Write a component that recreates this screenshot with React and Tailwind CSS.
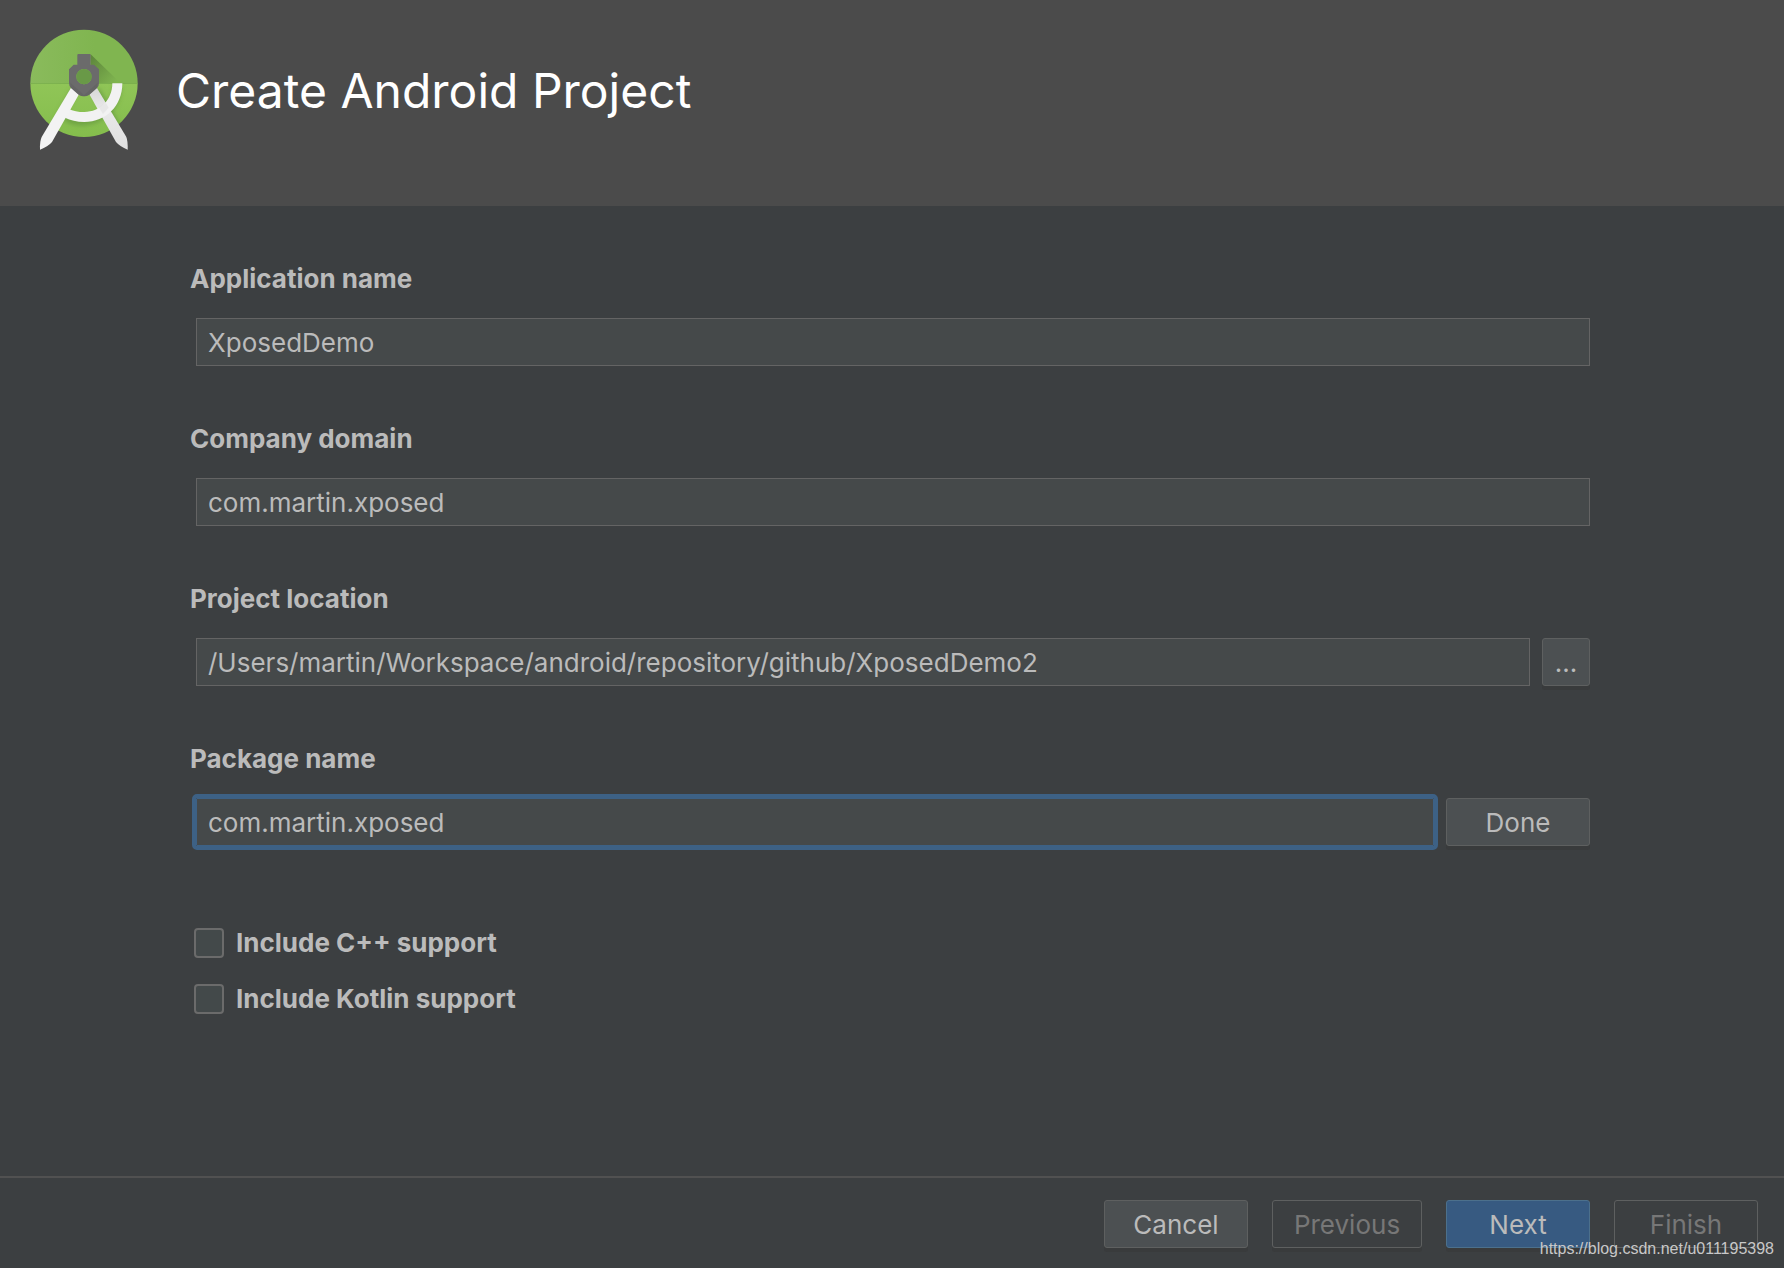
import React from "react";

const inputBase =
  "h-12 min-w-0 flex-1 border bg-[#45494a] px-[11px] text-[26px] leading-8 text-[#bbbbbb] outline-none";
const focusedInput =
  "h-12 min-w-0 flex-1 rounded-[1px] border border-[#3d6185] bg-[#45494a] px-[11px] text-[26px] leading-8 text-[#bbbbbb] outline-4 outline-[#3d6185]";
const buttonBase =
  "h-12 rounded-[3px] border pt-0.5 text-[26px] leading-8 shadow-[0_4px_0_#393b3c]";

function Logo() {
  return (
    <svg
      width="108"
      height="121"
      viewBox="90 87 324 363"
      role="img"
      aria-label="Android Studio"
      className="shrink-0"
    >
      <defs>
        <clipPath id="disc">
          <circle cx="252" cy="250" r="161" />
        </clipPath>
        <linearGradient id="lower" x1="0" y1="0" x2="0" y2="1">
          <stop offset="0" stopColor="#90c557" />
          <stop offset="1" stopColor="#84bd4c" />
        </linearGradient>
        <linearGradient id="upper" x1="0" y1="0" x2="1" y2="0">
          <stop offset="0" stopColor="#8abb5c" />
          <stop offset="0.6" stopColor="#80b550" />
        </linearGradient>
        <linearGradient id="cast" x1="270" y1="180" x2="345" y2="250" gradientUnits="userSpaceOnUse">
          <stop offset="0" stopColor="#5f883c" />
          <stop offset="1" stopColor="#80b550" />
        </linearGradient>
        <linearGradient id="leg" x1="0" y1="0" x2="0" y2="1">
          <stop offset="0" stopColor="#d6d6d6" />
          <stop offset="0.35" stopColor="#e9e9e9" />
          <stop offset="1" stopColor="#e0e0e0" />
        </linearGradient>
        <filter id="soft" x="-30%" y="-30%" width="160%" height="160%">
          <feGaussianBlur stdDeviation="7" />
        </filter>
      </defs>
      <g clipPath="url(#disc)">
        <rect x="90" y="87" width="324" height="165" fill="url(#upper)" />
        <rect x="90" y="252" width="324" height="165" fill="url(#lower)" />
        <path d="M272 163 L362 250 L275 250 Z" fill="url(#cast)" />
        <rect x="90" y="250" width="324" height="2" fill="#79ae4b" />
        <g filter="url(#soft)" fill="none" stroke="#5f933a" strokeOpacity="0.6">
          <path d="M352 258 C352 312 310 360 252 364 C230 365 210 360 198 350" strokeWidth="26" />
          <path d="M288 270 L365 405" strokeWidth="24" />
          <path d="M224 268 L150 405" strokeWidth="20" />
        </g>
      </g>
      <path d="M268 283 L289 261 L379 411 Q384 424 383 449 Q360 440 348 426 Z" fill="url(#leg)" />
      <path
        d="M337 250 H367 C367 318 318 366 253 366 C230 366 211 360 195 353 L205 326 C219 333 235 336 253 336 C301 336 337 299 337 250 Z"
        fill="#f2f2f2"
      />
      <path d="M215 260 L237 283 L156 426 Q144 440 120 449 Q119 424 125 411 Z" fill="#f3f3f3" />
      <path d="M318 309 L326 323 L309 342 L296 321 Z" fill="#dedede" opacity="0.55" />
      <path
        fillRule="evenodd"
        d="M235 162 H269 Q272 162 272 165 V194 H282 L297 208 V250 Q297 258 291 264 L268 284 Q252 293 236 284 L213 264 Q207 258 207 250 V208 L221 194 H232 V165 Q232 162 235 162 Z M252 207 A23 23 0 1 0 252 253 A23 23 0 1 0 252 207 Z"
        fill="#6b6b6b"
      />
      <circle cx="252" cy="230" r="23" fill="#699947" />
      <path d="M211 248 L252 286 L293 248 L291 264 L268 284 Q252 293 236 284 L213 264 Z" fill="#5f5f5f" opacity="0.5" />
    </svg>
  );
}

function Field({ id, label, value, focused, children }) {
  return (
    <div className="flex flex-col gap-[22px]">
      <label htmlFor={id} className="text-[26px] leading-[34px] font-bold">
        {label}
      </label>
      <div className="flex gap-3 pl-1.5">
        <input
          id={id}
          type="text"
          defaultValue={value}
          className={focused ? focusedInput : `${inputBase} border-[#646464]`}
        />
        {children}
      </div>
    </div>
  );
}

function Check({ id, label }) {
  return (
    <div className="flex items-center gap-3">
      <input
        id={id}
        type="checkbox"
        className="size-[30px] appearance-none rounded-[4px] border-2 border-[#6b6b6b] bg-[#43494a] checked:bg-[#375a81]"
      />
      <label htmlFor={id} className="text-[26px] leading-8 font-bold">
        {label}
      </label>
    </div>
  );
}

export default function App() {
  return (
    <div className="relative flex min-h-screen flex-col bg-[#3c3f41] font-['Inter',sans-serif] text-[#bbbbbb]">
      <header className="flex h-[206px] items-start gap-[38px] bg-[#4b4b4b] pt-[29px] pl-[30px]">
        <Logo />
        <h1 className="pt-8 text-5xl leading-[60px] text-white">Create Android Project</h1>
      </header>

      <main className="flex flex-1 flex-col gap-14 pt-14 pr-[194px] pl-[190px]">
        <Field id="app-name" label="Application name" value="XposedDemo" />
        <Field id="domain" label="Company domain" value="com.martin.xposed" />
        <Field
          id="location"
          label="Project location"
          value="/Users/martin/Workspace/android/repository/github/XposedDemo2"
        >
          <button type="button" aria-label="Browse" className={`${buttonBase} w-12 border-[#5e6060] bg-[#4c5052]`}>
            ...
          </button>
        </Field>
        <Field id="package" label="Package name" value="com.martin.xposed" focused>
          <button type="button" className={`${buttonBase} w-36 border-[#5e6060] bg-[#4c5052]`}>
            Done
          </button>
        </Field>
        <div className="flex flex-col gap-6 pt-[25px] pl-1">
          <Check id="cpp" label="Include C++ support" />
          <Check id="kotlin" label="Include Kotlin support" />
        </div>
      </main>

      <footer className="flex justify-end gap-6 border-t-2 border-[#515151] pt-[22px] pr-[26px] pb-5">
        <button type="button" className={`${buttonBase} w-36 border-[#5e6060] bg-[#4c5052]`}>
          Cancel
        </button>
        <button type="button" disabled className={`${buttonBase} w-[150px] border-[#5e6060] bg-[#3c3f41] text-[#777777]`}>
          Previous
        </button>
        <button type="button" className={`${buttonBase} w-36 border-[#4c708c] bg-[#375a81]`}>
          Next
        </button>
        <button type="button" disabled className={`${buttonBase} w-36 border-[#5e6060] bg-[#3c3f41] text-[#777777]`}>
          Finish
        </button>
      </footer>

      <span className="pointer-events-none absolute right-2.5 bottom-[7px] font-['Liberation_Sans',sans-serif] text-base leading-6 text-[#c8c8c8]">
        https://blog.csdn.net/u011195398
      </span>
    </div>
  );
}
